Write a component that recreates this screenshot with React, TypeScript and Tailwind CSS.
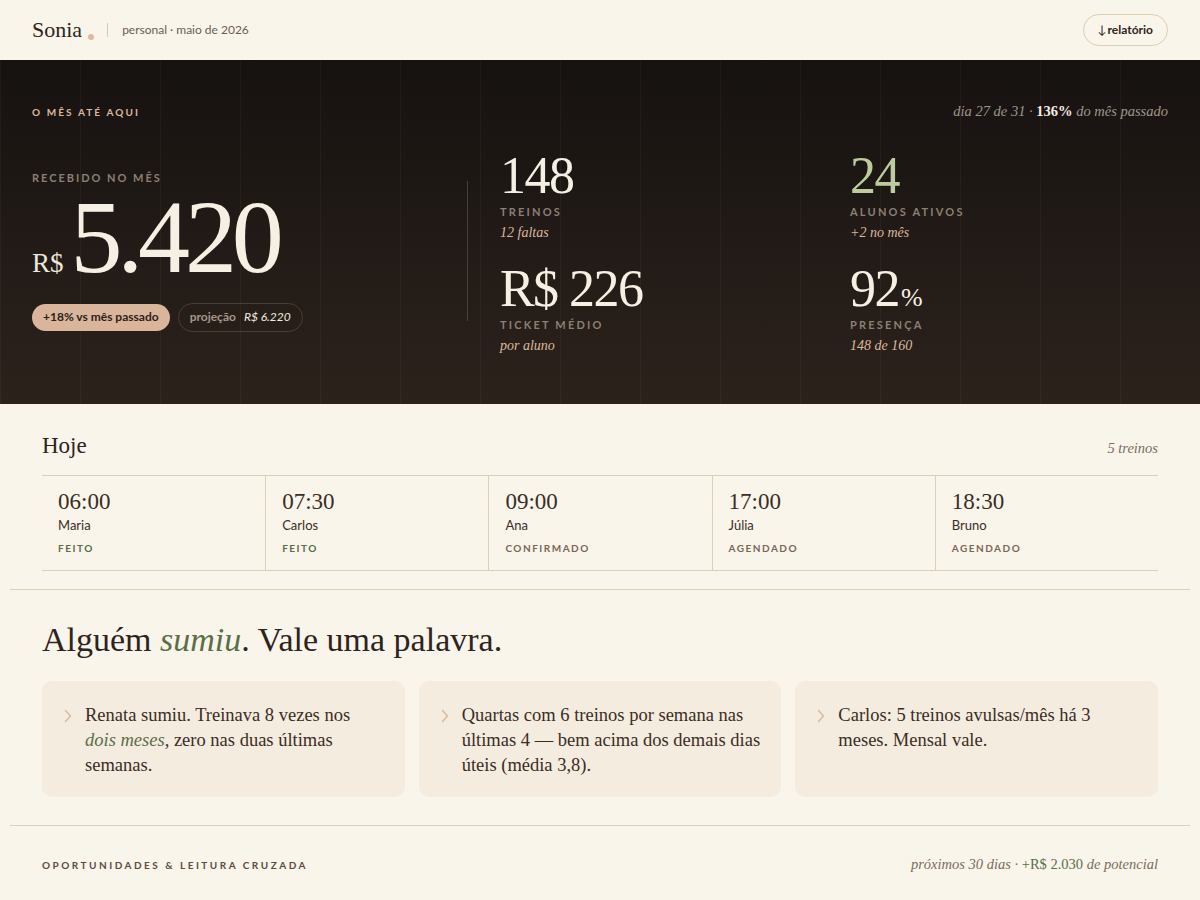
import React from "react";

const serif = "font-['Liberation_Serif','DejaVu_Serif',serif]";
const sans = "font-['Lato','Noto_Sans',sans-serif]";

type Slot = { time: string; name: string; status: string; done?: boolean };

const slots: Slot[] = [
  { time: "06:00", name: "Maria", status: "FEITO", done: true },
  { time: "07:30", name: "Carlos", status: "FEITO", done: true },
  { time: "09:00", name: "Ana", status: "CONFIRMADO" },
  { time: "17:00", name: "Júlia", status: "AGENDADO" },
  { time: "18:30", name: "Bruno", status: "AGENDADO" },
];

function Chevron() {
  return (
    <svg width="8" height="14" viewBox="0 0 8 14" className="mt-[6px] shrink-0" fill="none">
      <path d="M1.5 1.5 L6.5 7 L1.5 12.5" stroke="#dcb79c" strokeWidth="1.4" strokeLinecap="round" strokeLinejoin="round" />
    </svg>
  );
}

function Stat({
  value,
  label,
  sub,
  green,
}: {
  value: React.ReactNode;
  label: string;
  sub: string;
  green?: boolean;
}) {
  return (
    <div className="flex flex-col">
      <div
        className={`${serif} text-[52px] leading-[56px] tracking-[-0.03em] ${
          green ? "text-[#bdcc9f]" : "text-[#f6f0e4]"
        }`}
      >
        {value}
      </div>
      <div className={`${sans} mt-[1px] text-[11px] font-bold leading-[14px] tracking-[0.2em] text-[#8b8074]`}>
        {label}
      </div>
      <div className={`${serif} mt-[5px] text-[14px] italic leading-[18px] text-[#dcb79c]`}>{sub}</div>
    </div>
  );
}

function Nudge({ children }: { children: React.ReactNode }) {
  return (
    <div className="flex gap-[13px] rounded-[10px] bg-[#f3ecdf] pb-[19px] pl-[22px] pr-[20px] pt-[22px]">
      <Chevron />
      <p className={`${serif} text-[18.5px] leading-[25px] text-[#3b2d24]`}>{children}</p>
    </div>
  );
}

export default function App() {
  return (
    <div className={`min-h-screen bg-[#f9f5eb] ${sans} text-[#3b2d24]`}>
      {/* top bar */}
      <header className="flex h-[60px] items-center justify-between px-8">
        <div className="flex items-center">
          <span className={`${serif} text-[22px] leading-none text-[#2e231d]`}>Sonia</span>
          <span className="ml-[6px] mt-[14px] h-[6px] w-[6px] rounded-full bg-[#dfb9a0]" />
          <span className="ml-[13px] h-[14px] w-px bg-[#d6cab6]" />
          <span className="ml-[14px] text-[12px] text-[#6b5d52]">personal · maio de 2026</span>
        </div>
        <button className="flex h-[32px] items-center rounded-full border border-[#dccfb6] px-[14px] text-[12px] font-bold text-[#2e231d]">
          <span className="mr-[1px] font-normal">↓</span>relatório
        </button>
      </header>

      {/* month summary */}
      <section className="relative overflow-hidden bg-gradient-to-b from-[#161210] to-[#2c221c] px-8 pb-[49px] pt-[41px]">
        <div className="pointer-events-none absolute inset-0 bg-[linear-gradient(to_right,rgba(255,214,170,0.045)_1px,transparent_1px)] bg-[size:80px_100%]" />
        <div className="relative">
          <div className="flex items-baseline justify-between">
            <span className="text-[10px] font-bold leading-[14px] tracking-[0.21em] text-[#dcb79c]">O MÊS ATÉ AQUI</span>
            <span className={`${serif} text-[14.5px] italic text-[#a0958a]`}>
              dia 27 de 31 · <span className="not-italic font-bold text-[#f3ece0]">136%</span> do mês passado
            </span>
          </div>

          <div className="mt-[25px] flex items-center">
            <div className="w-[435px]">
              <div className="text-[11px] font-bold leading-[14px] tracking-[0.18em] text-[#8b8074]">RECEBIDO NO MÊS</div>
              <div className="mt-[2px] flex items-baseline">
                <span className={`${serif} text-[27px] text-[#efe7da]`}>R$</span>
                <span className={`${serif} ml-[7px] text-[104px] leading-[100px] tracking-[-0.05em] text-[#f6f0e4]`}>
                  5.420
                </span>
              </div>
              <div className="mt-[16px] flex items-center gap-2">
                <span className="flex h-[27px] items-center rounded-full bg-[#d8b59b] px-[11px] text-[12px] font-bold text-[#2c1f18]">
                  +18% vs mês passado
                </span>
                <span className="flex h-[29px] items-center rounded-full border border-[#4a3e35] px-[11px] text-[12px]">
                  <span className="font-bold text-[#a39788]">projeção</span>
                  <span className="ml-[8px] italic text-[#f3ece0]">R$ 6.220</span>
                </span>
              </div>
            </div>

            <div className="h-[140px] w-px bg-[#4a3e35]" />

            <div className="grid flex-1 grid-cols-2 gap-x-8 gap-y-[19px] pl-8">
              <Stat value="148" label="TREINOS" sub="12 faltas" />
              <Stat value="24" label="ALUNOS ATIVOS" sub="+2 no mês" green />
              <Stat value="R$ 226" label="TICKET MÉDIO" sub="por aluno" />
              <Stat
                value={
                  <>
                    92<span className="ml-[2px] text-[26px] leading-none tracking-normal">%</span>
                  </>
                }
                label="PRESENÇA"
                sub="148 de 160"
              />
            </div>
          </div>
        </div>
      </section>

      {/* today */}
      <section className="px-[42px] pt-[27px]">
        <div className="flex items-baseline justify-between">
          <h2 className={`${serif} text-[23px] leading-[30px] text-[#2e231d]`}>Hoje</h2>
          <span className={`${serif} text-[14.5px] italic text-[#7a6c60]`}>5 treinos</span>
        </div>
        <div className="mt-[14px] grid grid-cols-5 border-y border-[#dcd0ba]">
          {slots.map((s, i) => (
            <div key={s.time} className={`px-4 pb-[15px] pt-3 ${i > 0 ? "border-l border-[#dcd0ba]" : ""}`}>
              <div className={`${serif} text-[23px] leading-[28px] text-[#3b2d24]`}>{s.time}</div>
              <div className="text-[13px] leading-[18px] text-[#3b2d24]">{s.name}</div>
              <div
                className={`mt-[7px] text-[10px] font-bold leading-[14px] tracking-[0.15em] ${
                  s.done ? "text-[#5b6b47]" : "text-[#7b6656]"
                }`}
              >
                {s.status}
              </div>
            </div>
          ))}
        </div>
      </section>

      <hr className="mx-[10px] mt-[18px] border-t border-[#dcd0ba]" />

      {/* nudges */}
      <section className="px-[42px] pt-[30px]">
        <h2 className={`${serif} text-[34px] leading-[40px] text-[#2e231d]`}>
          Alguém <em className="text-[#5b6e48]">sumiu</em>. Vale uma palavra.
        </h2>
        <div className="mt-[21px] grid grid-cols-3 gap-[14px]">
          <Nudge>
            Renata sumiu. Treinava 8 vezes nos <em className="text-[#5b6e48]">dois meses</em>, zero nas duas últimas
            semanas.
          </Nudge>
          <Nudge>Quartas com 6 treinos por semana nas últimas 4 — bem acima dos demais dias úteis (média 3,8).</Nudge>
          <Nudge>Carlos: 5 treinos avulsas/mês há 3 meses. Mensal vale.</Nudge>
        </div>
      </section>

      <hr className="mx-[10px] mt-[28px] border-t border-[#dcd0ba]" />

      {/* opportunities */}
      <section className="px-[42px] pb-10 pt-[28px]">
        <div className="flex items-baseline justify-between">
          <span className="text-[10px] font-bold leading-[14px] tracking-[0.25em] text-[#5c4b3f]">
            OPORTUNIDADES &amp; LEITURA CRUZADA
          </span>
          <span className={`${serif} text-[14.5px] italic text-[#7a6c60]`}>
            próximos 30 dias · <span className="not-italic text-[#5b6e48]">+R$ 2.030</span> de potencial
          </span>
        </div>
        <div className="mt-[26px] grid grid-cols-[518px_1fr] gap-[14px]">
          <div className="rounded-[10px] bg-[#f3ecdf] p-[22px]">
            <p className={`${serif} text-[17px] leading-[25px]`}>Renata: reativar com pacote de 4 treinos.</p>
          </div>
          <div className="rounded-[10px] bg-[#f3ecdf] p-[22px]">
            <p className={`${serif} text-[17px] leading-[25px]`}>Quartas cheias: abrir horário às 19:00.</p>
          </div>
        </div>
      </section>
    </div>
  );
}
